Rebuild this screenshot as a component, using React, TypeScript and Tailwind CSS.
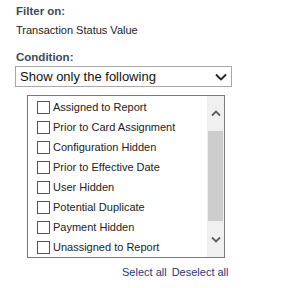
import React from "react";

const items = [
  "Assigned to Report",
  "Prior to Card Assignment",
  "Configuration Hidden",
  "Prior to Effective Date",
  "User Hidden",
  "Potential Duplicate",
  "Payment Hidden",
  "Unassigned to Report",
];

export default function App() {
  return (
    <div
      className="w-[302px] h-[288px] bg-white pl-[16px] pt-[3px] text-[11px] text-[#222]"
      style={{ fontFamily: '"Liberation Sans", Arial, sans-serif' }}
    >
      <div className="font-bold text-[#3b4a5a] leading-[16px] text-[11.5px]">Filter on:</div>
      <div className="leading-[16px] mt-[3px]">Transaction Status Value</div>
      <div className="font-bold text-[#3b4a5a] leading-[16px] mt-[11px] text-[11.5px]">Condition:</div>
      <div className="w-[217px] h-[21px] border border-[#a9a9a9] flex items-center justify-between pl-[4px] pr-[4px] text-[13px] text-[#111] mt-[1px] ml-[-1px]">
        <span>Show only the following</span>
        <svg width="12" height="8" viewBox="0 0 12 8">
          <path d="M1 1.5 L6 6.5 L11 1.5" fill="none" stroke="#222" strokeWidth="1.8" />
        </svg>
      </div>
      <div className="ml-[11px] mt-[8px] w-[198px] h-[163px] border border-[#7a7a7a] flex">
        <div className="flex-1 pt-[1px]">
          {items.map((t) => (
            <div key={t} className="h-[20px] flex items-center pl-[9px]">
              <div className="w-[13px] h-[13px] border border-[#555] bg-white mr-[3px]" />
              <span className="leading-[16px]">{t}</span>
            </div>
          ))}
        </div>
        <div className="w-[17px] bg-[#f0f0f0] flex flex-col items-center">
          <div className="h-[35px] flex items-center justify-center">
            <svg width="10" height="7" viewBox="0 0 10 7">
              <path d="M1 5.5 L5 1.5 L9 5.5" fill="none" stroke="#606060" strokeWidth="1.8" />
            </svg>
          </div>
          <div className="w-[15px] h-[90px] bg-[#cdcdcd]" />
          <div className="flex-1 flex items-center justify-center">
            <svg width="10" height="7" viewBox="0 0 10 7">
              <path d="M1 1.5 L5 5.5 L9 1.5" fill="none" stroke="#606060" strokeWidth="1.8" />
            </svg>
          </div>
        </div>
      </div>
      <div className="flex gap-[5px] ml-[106px] mt-[6px] text-[#1f3a7a] leading-[16px]">
        <span>Select all</span>
        <span>Deselect all</span>
      </div>
    </div>
  );
}
